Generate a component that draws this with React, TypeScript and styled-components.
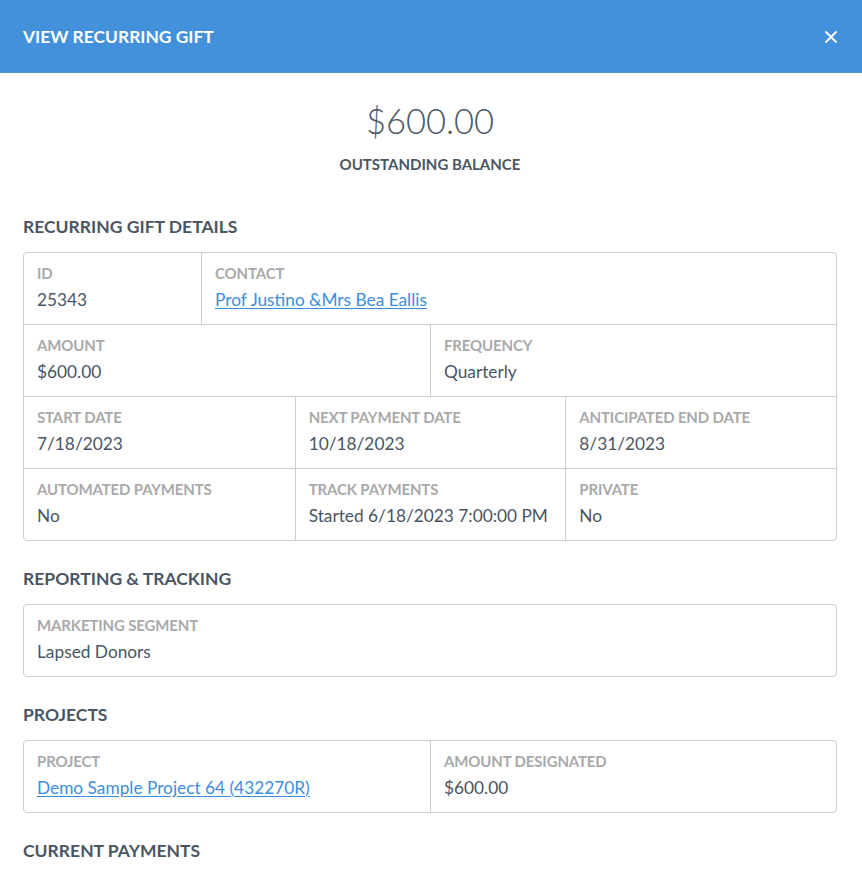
import React from 'react'
import styled, { createGlobalStyle } from 'styled-components'

const GlobalStyle = createGlobalStyle`
  body {
    margin: 0;
    background: #fff;
    font-family: Lato, "Open Sans", "Liberation Sans", sans-serif;
    color: #4a5563;
  }
`

const Header = styled.div`
  height: 73px;
  padding: 0 23px;
  background: #4291da;
  display: flex;
  align-items: center;
  justify-content: space-between;
  color: #fff;
`

const HeaderTitle = styled.h1`
  margin: 0;
  font-size: 17.4px;
  font-weight: 700;
`

const CloseButton = styled.button`
  border: 0;
  background: none;
  padding: 0;
  width: 16px;
  height: 16px;
  display: flex;
  align-items: center;
  justify-content: center;
  cursor: pointer;
`

const Body = styled.div`
  padding: 0 25px 20px 23px;
`

const Balance = styled.div`
  display: flex;
  flex-direction: column;
  align-items: center;
  padding-top: 26px;
  margin-bottom: 44px;
`

const BalanceAmount = styled.div`
  font-size: 34.5px;
  line-height: 44px;
  font-weight: 300;
  color: #4b5663;
`

const BalanceLabel = styled.div`
  margin-top: 12px;
  font-size: 15px;
  line-height: 18px;
  font-weight: 700;
  color: #4b5663;
`

const SectionTitle = styled.h2`
  margin: 0 0 15px;
  font-size: 17.5px;
  line-height: 20px;
  font-weight: 700;
  color: #4b5663;
`

const Panel = styled.div`
  border: 1px solid #cdcdcd;
  border-radius: 4px;
  margin-bottom: 28px;
`

type RowProps = {
  $columns: string
}

const Row = styled.div<RowProps>`
  display: grid;
  grid-template-columns: ${ props => props.$columns };
  & + & {
    border-top: 1px solid #cdcdcd;
  }
`

const Cell = styled.div`
  padding: 12px 13px 14px;
  min-width: 0;
  & + & {
    border-left: 1px solid #cdcdcd;
  }
`

const Label = styled.div`
  font-size: 15px;
  line-height: 17px;
  font-weight: 700;
  color: #a9a9a9;
  letter-spacing: -0.15px;
`

const Value = styled.div`
  margin-top: 8px;
  font-size: 17.3px;
  line-height: 20px;
  color: #4a5563;
`

const Link = styled.a`
  color: #3d8ddd;
  text-decoration: underline;
  text-underline-offset: 2px;
`

type Field = {
  label: string
  value: string
  link?: boolean
}

const Fields = ({ columns, fields }: { columns: string, fields: Field[] }) =>
  <Row $columns={ columns }>
    { fields.map(f =>
      <Cell key={ f.label }>
        <Label>{ f.label }</Label>
        <Value>{ f.link ? <Link href="#">{ f.value }</Link> : f.value }</Value>
      </Cell>) }
  </Row>

export default function App() {
  return (
    <>
      <GlobalStyle />
      <Header>
        <HeaderTitle>VIEW RECURRING GIFT</HeaderTitle>
        <CloseButton aria-label="Close">
          <svg width="12" height="12" viewBox="0 0 12 12">
            <path d="M1 1 L11 11 M11 1 L1 11" stroke="#fff" strokeWidth="1.8" strokeLinecap="round" />
          </svg>
        </CloseButton>
      </Header>
      <Body>
        <Balance>
          <BalanceAmount>$600.00</BalanceAmount>
          <BalanceLabel>OUTSTANDING BALANCE</BalanceLabel>
        </Balance>

        <SectionTitle>RECURRING GIFT DETAILS</SectionTitle>
        <Panel>
          <Fields columns="177px 1fr" fields={ [
            { label: 'ID', value: '25343' },
            { label: 'CONTACT', value: 'Prof Justino &Mrs Bea Eallis', link: true },
          ] } />
          <Fields columns="1fr 1fr" fields={ [
            { label: 'AMOUNT', value: '$600.00' },
            { label: 'FREQUENCY', value: 'Quarterly' },
          ] } />
          <Fields columns="1fr 1fr 1fr" fields={ [
            { label: 'START DATE', value: '7/18/2023' },
            { label: 'NEXT PAYMENT DATE', value: '10/18/2023' },
            { label: 'ANTICIPATED END DATE', value: '8/31/2023' },
          ] } />
          <Fields columns="1fr 1fr 1fr" fields={ [
            { label: 'AUTOMATED PAYMENTS', value: 'No' },
            { label: 'TRACK PAYMENTS', value: 'Started 6/18/2023 7:00:00 PM' },
            { label: 'PRIVATE', value: 'No' },
          ] } />
        </Panel>

        <SectionTitle>REPORTING &amp; TRACKING</SectionTitle>
        <Panel>
          <Fields columns="1fr" fields={ [
            { label: 'MARKETING SEGMENT', value: 'Lapsed Donors' },
          ] } />
        </Panel>

        <SectionTitle>PROJECTS</SectionTitle>
        <Panel>
          <Fields columns="1fr 1fr" fields={ [
            { label: 'PROJECT', value: 'Demo Sample Project 64 (432270R)', link: true },
            { label: 'AMOUNT DESIGNATED', value: '$600.00' },
          ] } />
        </Panel>

        <SectionTitle>CURRENT PAYMENTS</SectionTitle>
      </Body>
    </>
  )
}
